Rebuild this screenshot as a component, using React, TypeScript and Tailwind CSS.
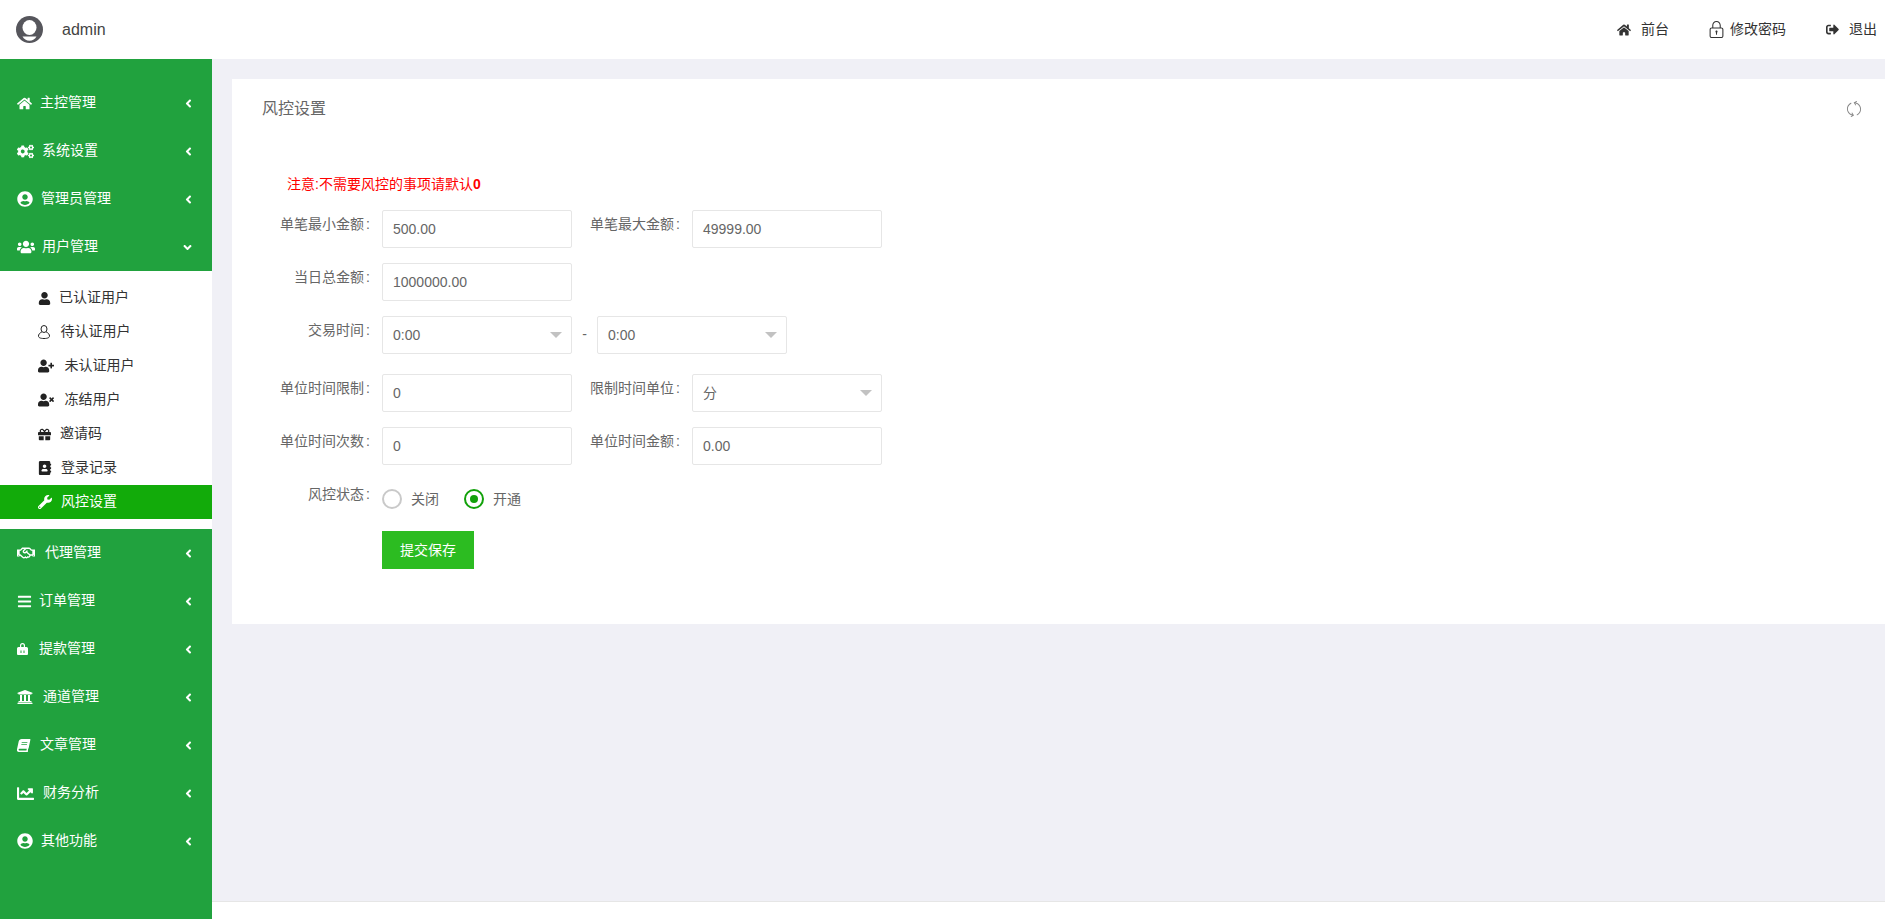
import { FaHome, FaCogs, FaUserCircle, FaUsers, FaUser, FaUserPlus, FaUserTimes, FaGift, FaWrench, FaRegHandshake, FaBars, FaUniversity, FaBook, FaChartLine, FaAngleLeft, FaAngleDown, FaAddressBook, FaSignOutAlt } from 'react-icons/fa'
import { SlLock, SlRefresh } from 'react-icons/sl'

const font = "font-['Liberation_Sans','Noto_Sans_CJK_SC',sans-serif]"

function UserOutline() {
  return (
    <svg width="12" height="14" viewBox="0 0 12 14" fill="none" stroke="currentColor" strokeWidth="1">
      <ellipse cx="6" cy="4" rx="3" ry="3.5" />
      <path d="M3.8 7C1.500 8 .5 9.500 .5 11c0 1.500 1.500 2.500 5.500 2.500s5.500-1 5.500-2.500c0-1.500-1-3-3.300-4" />
    </svg>
  )
}

function CashLock() {
  return (
    <svg width="11" height="12" viewBox="0 0 11 12">
      <path
        fill="#fff"
        fillRule="evenodd"
        d="M3 4V2.500a2.500 2.500 0 0 1 5 0V4h1.500A1.500 1.500 0 0 1 11 5.500V11a1 1 0 0 1-1 1H1a1 1 0 0 1-1-1V5.500A1.500 1.500 0 0 1 1.500 4zM4.200 3.900h2.600V2.600a1.300 1.300 0 0 0-2.600 0z"
      />
      <path fill="#21a23e" d="M3.500 7.500h1V10h-1zM6.500 7.500h1V10h-1z" />
    </svg>
  )
}

const topMenus = [
  { label: '主控管理', icon: <FaHome className="text-[15px]" />, box: 'w-[23px]' },
  { label: '系统设置', icon: <FaCogs className="text-[17px]" />, box: 'w-[25px]' },
  { label: '管理员管理', icon: <FaUserCircle className="text-[16px]" />, box: 'w-[24px]' },
]

const subMenus = [
  { label: '已认证用户', icon: <FaUser className="text-[13px]" />, box: 'w-[21px]' },
  { label: '待认证用户', icon: <UserOutline />, box: 'w-[22.5px]' },
  { label: '未认证用户', icon: <FaUserPlus className="text-[16px]" />, box: 'w-[26.5px]' },
  { label: '冻结用户', icon: <FaUserTimes className="text-[16px]" />, box: 'w-[26.5px]' },
  { label: '邀请码', icon: <FaGift className="text-[13px]" />, box: 'w-[22px]' },
  { label: '登录记录', icon: <FaAddressBook className="text-[14px]" />, box: 'w-[23px]' },
]

const bottomMenus = [
  { label: '代理管理', icon: <FaRegHandshake className="text-[18px]" />, box: 'w-[28px]' },
  { label: '订单管理', icon: <FaBars className="text-[15px]" />, box: 'w-[22px]' },
  { label: '提款管理', icon: <CashLock />, box: 'w-[22px]' },
  { label: '通道管理', icon: <FaUniversity className="text-[16px]" />, box: 'w-[26px]' },
  { label: '文章管理', icon: <FaBook className="-skew-x-12 text-[13px]" />, box: 'w-[23px]' },
  { label: '财务分析', icon: <FaChartLine className="text-[17px]" />, box: 'w-[26px]' },
  { label: '其他功能', icon: <FaUserCircle className="text-[16px]" />, box: 'w-[24px]' },
]

function MenuItem({ label, icon, box, open = false }) {
  return (
    <div className="flex h-12 items-center pl-[17px] text-sm text-white">
      <span className={`${box} flex shrink-0 items-center`}>{icon}</span>
      <span className="flex-1 pb-[2px]">{label}</span>
      {open ? <FaAngleDown className="mr-[18px] text-[13px]" /> : <FaAngleLeft className="mr-[17px] text-[13px]" />}
    </div>
  )
}

function TextField({ value }) {
  return (
    <div className="flex h-[38px] w-[190px] items-center rounded-[2px] border border-[#e6e6e6] bg-white pl-[10px] text-sm text-[#666]">
      {value}
    </div>
  )
}

function SelectField({ value }) {
  return (
    <div className="flex h-[38px] w-[190px] items-center justify-between rounded-[2px] border border-[#e6e6e6] bg-white pl-[10px] pr-[9px] text-sm text-[#666]">
      <span>{value}</span>
      <span className="h-0 w-0 border-x-[6px] border-t-[6px] border-x-transparent border-t-[#c2c2c2]" />
    </div>
  )
}

function Label({ text, width = 'w-[150px]' }) {
  return (
    <label className={`${width} pr-[12px] pt-[4px] text-right text-sm leading-5 text-[#666]`}>
      {text}
      <span className="ml-[2px]">:</span>
    </label>
  )
}

function Row({ children, className = '' }) {
  return <div className={`flex items-start ${className}`}>{children}</div>
}

export default function App() {
  return (
    <div className={`${font} flex h-[919px] flex-col overflow-hidden bg-[#f0f0f6]`}>
      <header className="flex h-[59px] shrink-0 items-center bg-white">
        <svg className="ml-4" width="27" height="27" viewBox="0 0 27 27">
          <circle cx="13.5" cy="13.5" r="13.5" fill="#56565c" />
          <ellipse cx="13.5" cy="11.5" rx="7" ry="7.5" fill="#fff" />
          <path d="M6.500 20.500h14c-1.300 2.700-3.900 4.200-7 4.200s-5.700-1.500-7-4.200z" fill="#fff" />
        </svg>
        <span className="ml-[19px] text-base text-[#444]">admin</span>
        <div className="ml-auto flex items-center text-sm text-[#333]">
          <FaHome className="text-[14px]" />
          <span className="ml-[10px] pb-[2px]">前台</span>
          <SlLock className="ml-[39px] text-[17px]" />
          <span className="ml-[5px] pb-[2px]">修改密码</span>
          <FaSignOutAlt className="ml-[40px] text-[13px]" />
          <span className="ml-[10px] mr-[8px] pb-[2px]">退出</span>
        </div>
      </header>

      <div className="flex min-h-0 flex-1">
        <aside className="w-[212px] shrink-0 bg-[#21a23e] pt-5">
          {topMenus.map((m) => (
            <MenuItem key={m.label} label={m.label} icon={m.icon} box={m.box} />
          ))}
          <MenuItem label="用户管理" icon={<FaUsers className="text-[18px]" />} box="w-[25px]" open />
          <div className="bg-white py-[10px]">
            {subMenus.map((m) => (
              <div key={m.label} className="flex h-[34px] items-center pl-[38px] text-sm text-[#333]">
                <span className={`${m.box} flex shrink-0 items-center text-[#222]`}>{m.icon}</span>
                <span className="pb-[2px]">{m.label}</span>
              </div>
            ))}
            <div className="flex h-[34px] items-center bg-[#12ab0a] pl-[38px] text-sm text-white">
              <span className="flex w-[23px] shrink-0 items-center">
                <FaWrench className="text-[14px]" />
              </span>
              <span className="pb-[2px]">风控设置</span>
            </div>
          </div>
          {bottomMenus.map((m) => (
            <MenuItem key={m.label} label={m.label} icon={m.icon} box={m.box} />
          ))}
        </aside>

        <main className="flex min-w-0 flex-1 flex-col">
          <div className="flex-1 pl-5 pt-5">
            <section className="h-[545px] bg-white">
              <div className="flex h-[60px] items-center justify-between pl-[30px] pr-[23px]">
                <h2 className="text-base font-normal text-[#666]">风控设置</h2>
                <SlRefresh className="text-[16px] text-[#888]" />
              </div>
              <div className="pt-[35px]">
                <p className="ml-[55px] text-sm text-[#f00]">
                  注意:不需要风控的事项请默认<b>0</b>
                </p>
                <div className="mt-[16px] flex flex-col">
                  <Row>
                    <Label text="单笔最小金额" />
                    <TextField value="500.00" />
                    <Label text="单笔最大金额" width="w-[120px]" />
                    <TextField value="49999.00" />
                  </Row>
                  <Row className="mt-[15px]">
                    <Label text="当日总金额" />
                    <TextField value="1000000.00" />
                  </Row>
                  <Row className="mt-[15px]">
                    <Label text="交易时间" />
                    <SelectField value="0:00" />
                    <span className="w-[25px] pt-[8px] text-center text-sm text-[#666]">-</span>
                    <SelectField value="0:00" />
                  </Row>
                  <Row className="mt-[20px]">
                    <Label text="单位时间限制" />
                    <TextField value="0" />
                    <Label text="限制时间单位" width="w-[120px]" />
                    <SelectField value="分" />
                  </Row>
                  <Row className="mt-[15px]">
                    <Label text="单位时间次数" />
                    <TextField value="0" />
                    <Label text="单位时间金额" width="w-[120px]" />
                    <TextField value="0.00" />
                  </Row>
                  <Row className="mt-[15px]">
                    <Label text="风控状态" />
                    <div className="flex h-[38px] items-center text-sm text-[#666]">
                      <span className="h-5 w-5 rounded-full border-2 border-[#c9c9c9] bg-white" />
                      <span className="ml-[9px]">关闭</span>
                      <span className="ml-[25px] flex h-5 w-5 items-center justify-center rounded-full border-2 border-[#12a10a]">
                        <span className="h-2 w-2 rounded-full bg-[#12a10a]" />
                      </span>
                      <span className="ml-[9px]">开通</span>
                    </div>
                  </Row>
                  <Row className="mt-[13px]">
                    <div className="w-[150px]" />
                    <button className="h-[38px] w-[92px] bg-[#2cbc21] text-sm text-white">提交保存</button>
                  </Row>
                </div>
              </div>
            </section>
          </div>
          <footer className="h-[18px] shrink-0 border-t border-[#e6e6e6] bg-white" />
        </main>
      </div>
    </div>
  )
}
